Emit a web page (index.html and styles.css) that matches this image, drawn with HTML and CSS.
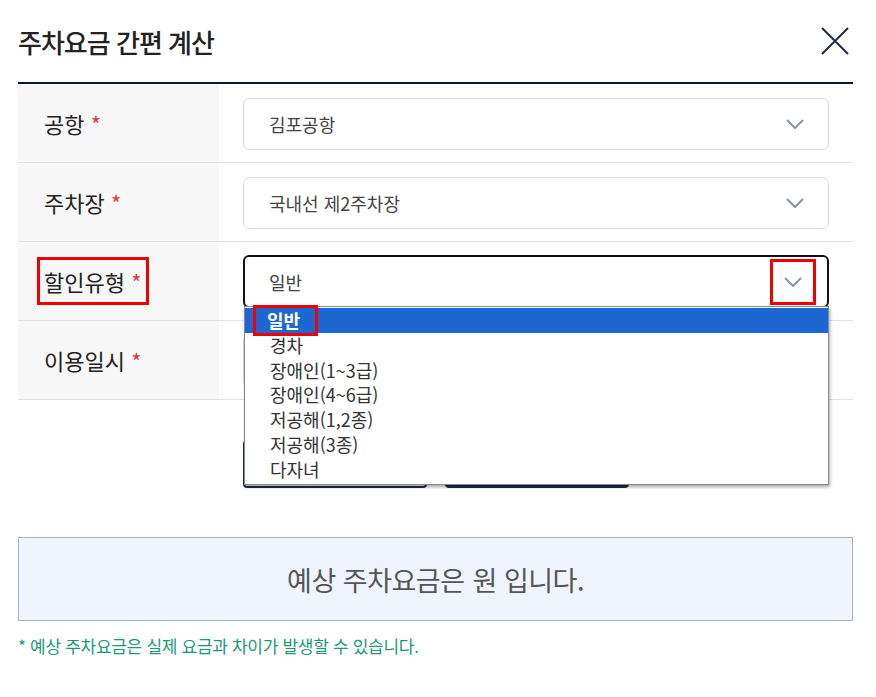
FILE: index.html
```html
<!DOCTYPE html>
<html lang="ko">
<head>
    <meta charset="utf-8">
    <title>주차요금 간편 계산</title>
    <link rel="stylesheet" href="styles.css">
</head>
<body>
    <div class="modal">
        <div class="modal-head">
            <h2 class="modal-title">주차요금 간편 계산</h2>
            <button class="btn-close" type="button" aria-label="닫기">
                <svg width="28" height="28" viewBox="0 0 28 28"><path d="M1 1 L27 27 M27 1 L1 27" stroke="#1f2b4a" stroke-width="2" fill="none"/></svg>
            </button>
        </div>

        <div class="calc-table">
            <div class="calc-row">
                <div class="calc-label"><span>공항 <em>*</em></span></div>
                <div class="calc-field">
                    <div class="select">
                        <span>김포공항</span>
                        <span class="arrow"><svg width="18" height="10" viewBox="0 0 18 10"><path d="M1 1 L9 9 L17 1" stroke="#8a92aa" stroke-width="2" fill="none"/></svg></span>
                    </div>
                </div>
            </div>
            <div class="calc-row">
                <div class="calc-label"><span>주차장 <em>*</em></span></div>
                <div class="calc-field">
                    <div class="select">
                        <span>국내선 제2주차장</span>
                        <span class="arrow"><svg width="18" height="10" viewBox="0 0 18 10"><path d="M1 1 L9 9 L17 1" stroke="#8a92aa" stroke-width="2" fill="none"/></svg></span>
                    </div>
                </div>
            </div>
            <div class="calc-row">
                <div class="calc-label"><span class="mark mark-label">할인유형 <em>*</em></span></div>
                <div class="calc-field">
                    <div class="select is-open">
                        <span>일반</span>
                        <span class="arrow mark mark-arrow"><svg width="18" height="10" viewBox="0 0 18 10"><path d="M1 1 L9 9 L17 1" stroke="#8a92aa" stroke-width="2" fill="none"/></svg></span>
                    </div>
                    <ul class="select-list">
                        <li class="selected"><span class="mark mark-option">일반</span></li>
                        <li>경차</li>
                        <li>장애인(1~3급)</li>
                        <li>장애인(4~6급)</li>
                        <li>저공해(1,2종)</li>
                        <li>저공해(3종)</li>
                        <li>다자녀</li>
                    </ul>
                </div>
            </div>
            <div class="calc-row">
                <div class="calc-label"><span>이용일시 <em>*</em></span></div>
                <div class="calc-field">
                    <div class="select"></div>
                </div>
            </div>
        </div>

        <div class="calc-buttons">
            <button class="btn btn-line" type="button" aria-label="초기화"></button>
            <button class="btn btn-fill" type="button" aria-label="계산하기"></button>
        </div>

        <div class="result-box">예상 주차요금은 <strong></strong> 원 입니다.</div>
        <p class="result-note">* 예상 주차요금은 실제 요금과 차이가 발생할 수 있습니다.</p>
    </div>
</body>
</html>
```

FILE: styles.css
```css
body {
    margin: 0;
    background: #fff;
    font-family: "Noto Sans CJK KR", "Noto Sans", sans-serif;
    color: #222;
}

.modal {
    width: 835px;
    margin-left: 18px;
}

.modal-head {
    display: flex;
    align-items: center;
    justify-content: space-between;
    height: 82px;
    border-bottom: 2px solid #0b1a2e;
}

.modal-title {
    margin: 0;
    font-size: 26px;
    font-weight: 500;
    letter-spacing: -1px;
    color: #222;
}

.btn-close {
    border: none;
    background: none;
    padding: 0;
    margin-right: 4px;
    width: 28px;
    height: 28px;
    cursor: pointer;
}

.calc-row {
    display: flex;
    height: 78px;
    border-bottom: 1px solid #e2e2e2;
}

.calc-label {
    width: 175px;
    padding-left: 26px;
    background: #f7f7f7;
    display: flex;
    align-items: center;
    font-size: 22px;
    color: #222;
}

.calc-label em {
    font-style: normal;
    color: #e03a3a;
}

.calc-field {
    position: relative;
    flex: 1;
    padding: 14px 24px 0 24px;
}

.select {
    display: flex;
    align-items: center;
    justify-content: space-between;
    box-sizing: border-box;
    height: 52px;
    padding: 0 24px 0 25px;
    border: 1px solid #dcdcdc;
    border-radius: 6px;
    background: #fff;
    font-size: 18px;
    color: #444;
}

.select .arrow {
    display: flex;
    align-items: center;
}

.select.is-open {
    border: 2px solid #111;
    height: 53px;
    margin-top: -1px;
    padding-left: 24px;
    padding-right: 11px;
}

.mark {
    border: 3px solid #f20000;
}

.mark-label {
    display: inline-block;
    padding: 8px 5px 8px 4px;
    margin-left: -7px;
    line-height: 1.2;
}

.mark-arrow {
    box-sizing: border-box;
    width: 46px;
    height: 46px;
    justify-content: center;
}

.mark-option {
    display: inline-block;
    margin: -4px 0 -4px -17px;
    padding: 0 15px 0 11px;
    line-height: 25px;
}

.select-list {
    position: absolute;
    top: 64px;
    left: 25px;
    right: 24px;
    margin: 0;
    padding: 1px 0 2px;
    list-style: none;
    background: #fff;
    border: 1px solid #8a8a8a;
    box-shadow: 1px 2px 3px rgba(0, 0, 0, 0.35);
    z-index: 10;
}

.select-list li {
    height: 24.8px;
    line-height: 24.8px;
    padding-left: 25px;
    font-size: 18px;
    color: #333;
}

.select-list li.selected {
    background: #1c67d1;
    color: #fff;
    font-weight: 700;
}

.calc-buttons {
    display: flex;
    gap: 18px;
    margin-top: 40px;
    padding-left: 225px;
}

.btn {
    width: 184px;
    height: 48px;
    border: 2px solid #1f2b4a;
    border-radius: 4px;
    font-family: inherit;
    font-size: 17px;
}

.btn-line {
    background: #fff;
    color: #1f2b4a;
}

.btn-fill {
    background: #1f2b4a;
    color: #fff;
}

.result-box {
    margin-top: 49px;
    height: 82px;
    border: 1px solid #a9b0c8;
    background: #f0f4fe;
    display: flex;
    align-items: center;
    justify-content: center;
    font-size: 27px;
    letter-spacing: -0.5px;
    color: #555;
}

.result-box strong {
    display: inline-block;
    width: 8px;
}

.result-note {
    margin: 12px 0 0;
    font-size: 17px;
    letter-spacing: -0.3px;
    color: #179a78;
}
```
